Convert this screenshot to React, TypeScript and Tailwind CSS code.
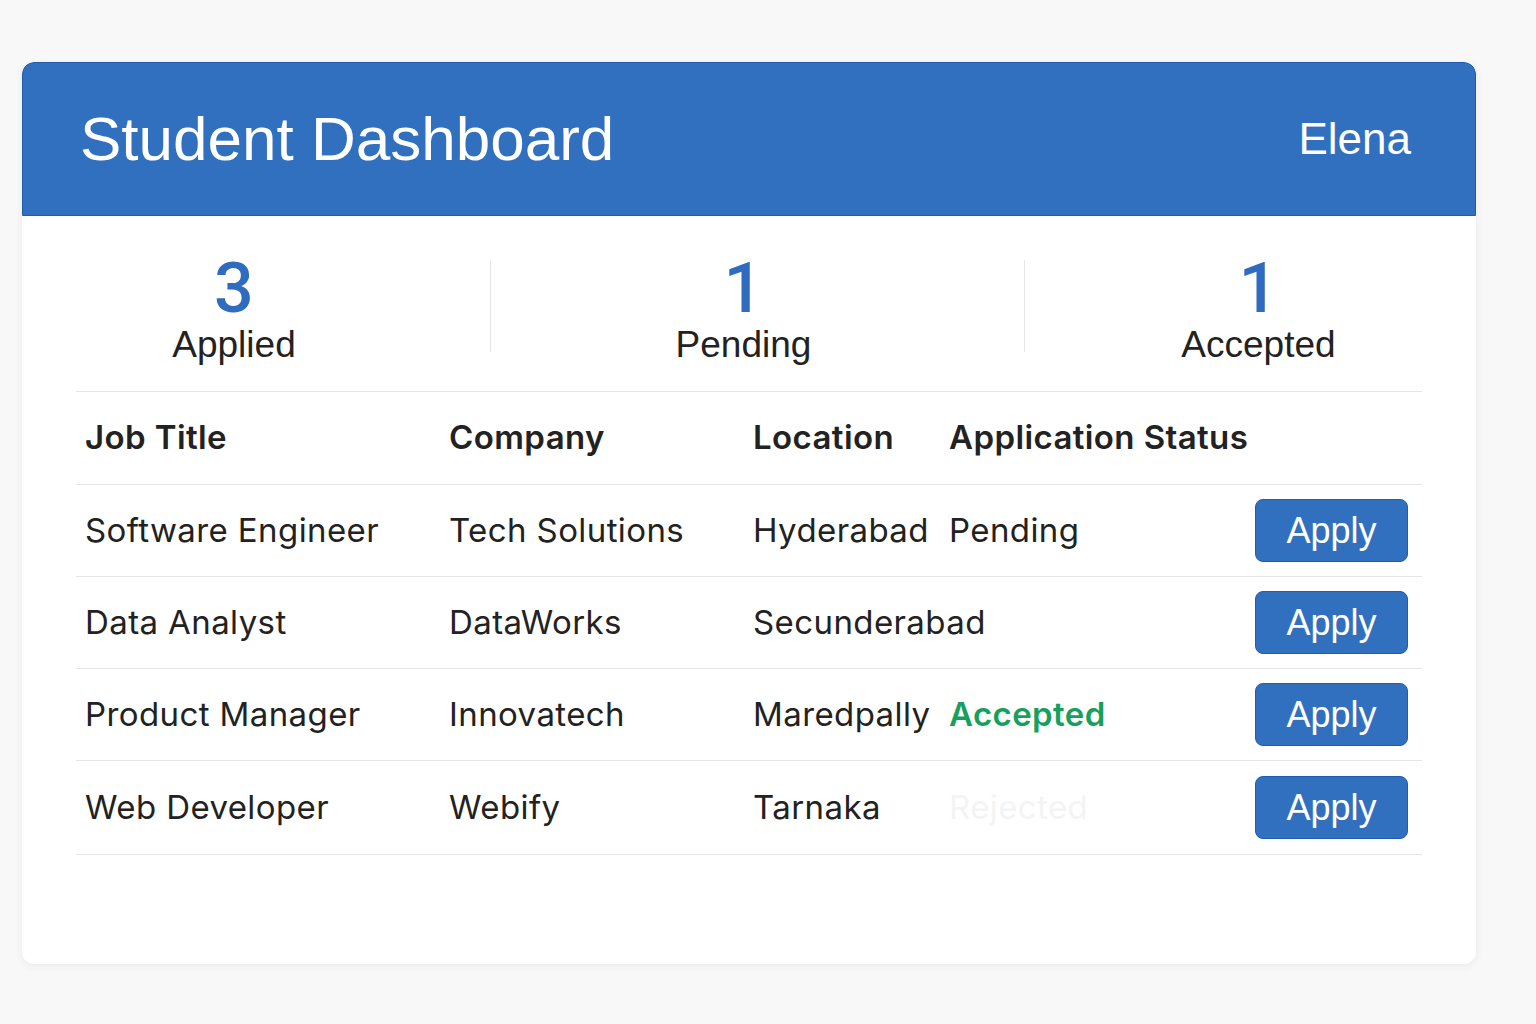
import React from 'react';

type Job = {
  title: string;
  company: string;
  location: string;
  status: string;
  tone: 'plain' | 'green' | 'ghost';
};

const jobs: Job[] = [
  { title: 'Software Engineer', company: 'Tech Solutions', location: 'Hyderabad', status: 'Pending', tone: 'plain' },
  { title: 'Data Analyst', company: 'DataWorks', location: 'Secunderabad', status: '', tone: 'plain' },
  { title: 'Product Manager', company: 'Innovatech', location: 'Maredpally', status: 'Accepted', tone: 'green' },
  { title: 'Web Developer', company: 'Webify', location: 'Tarnaka', status: 'Rejected', tone: 'ghost' },
];

const statusClass = {
  plain: 'text-[#222222]',
  green: 'text-[#17a05d] font-semibold',
  ghost: 'text-[#f4f4f4]',
};

const Stat = ({ value, label, className }: { value: string; label: string; className: string }) => (
  <div className={`flex flex-col items-center ${className}`}>
    <span className="text-[70px] leading-none font-medium text-[#2f6cc0] font-['Roboto',sans-serif]">{value}</span>
    <span className="text-[37px] leading-[44px] text-[#222222] font-['Liberation_Sans',sans-serif]">{label}</span>
  </div>
);

const App = () => {
  return (
    <div className="min-h-screen bg-[#f8f8f8] pt-[62px] pl-[22px] font-['Inter',sans-serif]">
      <div className="w-[1454px] h-[902px] bg-white rounded-[12px] shadow-[0_2px_8px_rgba(0,0,0,0.06)] overflow-hidden">
        <header className="h-[154px] bg-[#3070bf] border border-[#1e5cb0] rounded-t-[12px] flex items-center justify-between pl-[57px] pr-[64px] text-white font-['Liberation_Sans',sans-serif]">
          <h1 className="text-[62px] leading-none">Student Dashboard</h1>
          <span className="text-[44px] leading-none">Elena</span>
        </header>

        <div className="px-[54px]">
          <div className="flex h-[176px] pt-[37px] border-b border-[#e6e6e6]">
            <Stat value="3" label="Applied" className="w-[414px] pr-[98px]" />
            <div className="w-px h-[92px] mt-[7px] bg-[#e6e6e6]" />
            <Stat value="1" label="Pending" className="w-[533px] pr-[28px]" />
            <div className="w-px h-[92px] mt-[7px] bg-[#e6e6e6]" />
            <Stat value="1" label="Accepted" className="flex-1 pl-[70px]" />
          </div>

          <div className="grid grid-cols-[364px_304px_196px_1fr_auto] text-[33px] tracking-[0.4px] text-[#222222]">
            <div className="h-[93px] flex items-center pl-[9px] font-semibold border-b border-[#e6e6e6]">Job Title</div>
            <div className="h-[93px] flex items-center pl-[9px] font-semibold border-b border-[#e6e6e6]">Company</div>
            <div className="h-[93px] flex items-center pl-[9px] font-semibold border-b border-[#e6e6e6]">Location</div>
            <div className="h-[93px] flex items-center pl-[9px] font-semibold border-b border-[#e6e6e6] whitespace-nowrap">Application Status</div>
            <div className="h-[93px] border-b border-[#e6e6e6]" />

            {jobs.map((job, i) => (
              <React.Fragment key={job.title}>
                <div className={`${i === jobs.length - 1 ? 'h-[94px]' : 'h-[92px]'} flex items-center pl-[9px] border-b border-[#e6e6e6]`}>{job.title}</div>
                <div className={`${i === jobs.length - 1 ? 'h-[94px]' : 'h-[92px]'} flex items-center pl-[9px] border-b border-[#e6e6e6]`}>{job.company}</div>
                <div className={`${i === jobs.length - 1 ? 'h-[94px]' : 'h-[92px]'} flex items-center pl-[9px] border-b border-[#e6e6e6] whitespace-nowrap`}>{job.location}</div>
                <div className={`${i === jobs.length - 1 ? 'h-[94px]' : 'h-[92px]'} flex items-center pl-[9px] border-b border-[#e6e6e6] ${statusClass[job.tone]}`}>{job.status}</div>
                <div className={`${i === jobs.length - 1 ? 'h-[94px]' : 'h-[92px]'} flex items-center pr-[14px] border-b border-[#e6e6e6]`}>
                  <button className="w-[153px] h-[63px] rounded-[8px] bg-[#3070bf] border border-[#1e5cb0] text-white text-[36px] tracking-normal leading-none font-['Liberation_Sans',sans-serif]">
                    Apply
                  </button>
                </div>
              </React.Fragment>
            ))}
          </div>
        </div>
      </div>
    </div>
  );
};

export default App;
